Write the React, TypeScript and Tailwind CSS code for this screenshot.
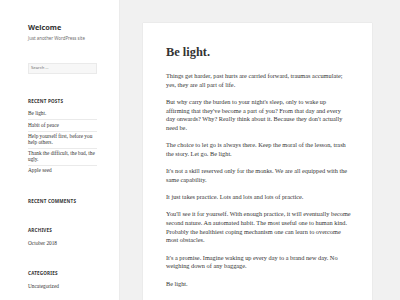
import React from 'react';

// lines broken where the reference breaks them
const paragraphs: string[][] = [
  ['Things get harder, past hurts are carried forward, traumas accumulate;', 'yes, they are all part of life.'],
  [
    "But why carry the burden to your night's sleep, only to wake up",
    "affirming that they've become a part of you? From that day and every",
    "day onwards? Why? Really think about it. Because they don't actually",
    'need be.',
  ],
  ['The choice to let go is always there. Keep the moral of the lesson, trash', 'the story. Let go. Be light.'],
  ["It's not a skill reserved only for the monks. We are all equipped with the", 'same capability.'],
  ['It just takes practice. Lots and lots and lots of practice.'],
  [
    "You'll see it for yourself. With enough practice, it will eventually become",
    'second nature. An automated habit. The most useful one to human kind.',
    'Probably the healthiest coping mechanism one can learn to overcome',
    'most obstacles.',
  ],
  ["It's a promise. Imagine waking up every day to a brand new day. No", 'weighing down of any baggage.'],
  ['Be light.'],
];

const recentPosts = [
  'Be light.',
  'Habit of peace',
  'Help yourself first, before you help others.',
  'Thank the difficult, the bad, the ugly.',
  'Apple seed',
];

const serif = "font-['Liberation_Serif',serif]";
const sans = "font-['Noto_Sans',sans-serif]";

const WidgetTitle: React.FC<{ children: React.ReactNode }> = ({ children }) => (
  <h2 className={`${sans} text-[4.6px] leading-[6px] font-bold uppercase tracking-[0.04em] text-[#333]`}>
    {children}
  </h2>
);

const Sidebar: React.FC = () => (
  <aside className="w-[119px] shrink-0 bg-white pl-[28px] pr-[22px] pt-[22px] shadow-[0_0_1px_rgba(0,0,0,0.15)]">
    <h1 className={`${sans} text-[7.3px] leading-[10px] font-bold text-[#333]`}>Welcome</h1>
    <p className={`${sans} mt-[3px] text-[4.4px] leading-[6px] text-[#707070]`}>Just another WordPress site</p>

    <div className="mt-[22px] flex h-[11px] items-center border border-[#eaeaea] bg-[#f7f7f7] px-[2px]">
      <span className={`${sans} text-[4.2px] text-[#707070]`}>Search …</span>
    </div>

    <section className="mt-[24px]">
      <WidgetTitle>Recent Posts</WidgetTitle>
      <ul className={`${serif} mt-[4.75px] text-[5.3px] leading-[5.7px] text-[#333]`}>
        {recentPosts.map((p, i) => (
          <li key={p} className={`py-[2.4px] ${i > 0 ? 'border-t border-[#eaeaea]' : ''}`}>
            {p}
          </li>
        ))}
      </ul>
    </section>

    <section className="mt-[21.5px]">
      <WidgetTitle>Recent Comments</WidgetTitle>
    </section>

    <section className="mt-[23.3px]">
      <WidgetTitle>Archives</WidgetTitle>
      <ul className={`${serif} mt-[5.45px] text-[5.3px] leading-[5.7px] text-[#333]`}>
        <li className="py-[2.4px]">October 2018</li>
      </ul>
    </section>

    <section className="mt-[21px]">
      <WidgetTitle>Categories</WidgetTitle>
      <ul className={`${serif} mt-[5.45px] text-[5.3px] leading-[5.7px] text-[#333]`}>
        <li className="py-[2.4px]">Uncategorized</li>
      </ul>
    </section>
  </aside>
);

export default function App() {
  return (
    <div className="flex h-[300px] w-[400px] overflow-hidden bg-[#f1f1f1]">
      <Sidebar />
      <main className="pl-[24px] pt-[23px]">
        <article className="h-[300px] w-[229px] bg-white px-[23px] pt-[21px] shadow-[0_0_1px_rgba(0,0,0,0.15)]">
          <h1 className={`${serif} text-[12.4px] leading-[16px] font-bold text-[#333]`}>Be light.</h1>
          <div className={`${serif} mt-[12px] text-[6.3px] leading-[8.65px] text-[#333] whitespace-nowrap`}>
            {paragraphs.map((lines, i) => (
              <p key={i} className="mb-[8.65px]">
                {lines.map((l, j) => (
                  <React.Fragment key={j}>
                    {j > 0 && <br />}
                    {l}
                  </React.Fragment>
                ))}
              </p>
            ))}
          </div>
        </article>
      </main>
    </div>
  );
}
